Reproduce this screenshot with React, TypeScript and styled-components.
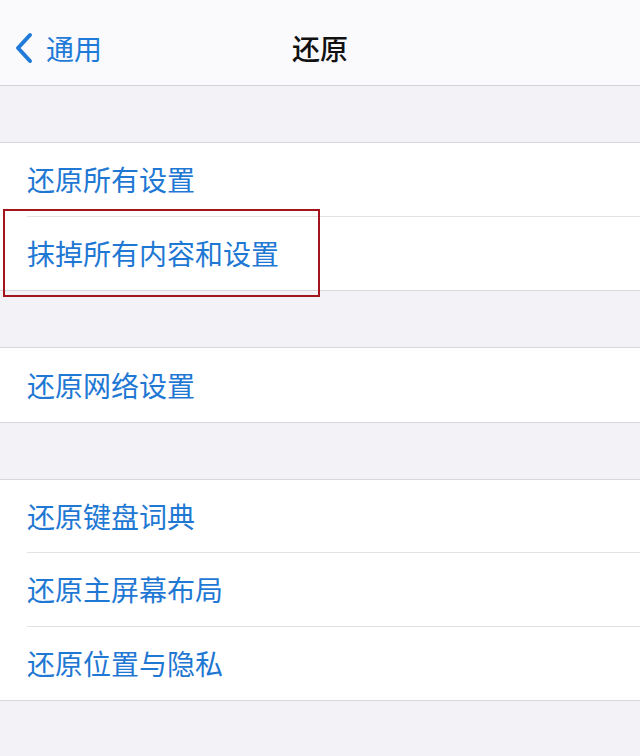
import React from "react";
import styled, { createGlobalStyle } from "styled-components";

const Global = createGlobalStyle`
  html, body {
    margin: 0;
    padding: 0;
    background: #f2f2f7;
  }
  body {
    font-family: "Noto Sans CJK SC", "Noto Sans", sans-serif;
  }
`;

const Page = styled.div`
  width: 640px;
  height: 756px;
  background: #f2f2f7;
  overflow: hidden;
`;

const NavBar = styled.div`
  height: 86px;
  background: #fafafc;
  border-bottom: 1px solid #d4d4d8;
  display: grid;
  grid-template-columns: 1fr auto 1fr;
  align-items: center;
  box-sizing: border-box;
  padding-top: 10px;
`;

const Back = styled.div`
  display: flex;
  align-items: center;
  gap: 12px;
  padding-left: 14px;
  color: #1f7ad8;
  font-size: 28px;
  line-height: 1;
`;

const Title = styled.div`
  color: #111;
  font-size: 28px;
  font-weight: 500;
  line-height: 1;
`;

const Gap = styled.div<{ $h: number }>`
  height: ${(p) => p.$h}px;
`;

const Group = styled.div`
  background: #fff;
  border-top: 1px solid #d8d8dc;
  border-bottom: 1px solid #d8d8dc;
`;

const Row = styled.div<{ $last?: boolean }>`
  position: relative;
  box-sizing: border-box;
  height: 73.5px;
  margin-left: 27px;
  display: flex;
  align-items: center;
  color: #1f78d3;
  font-size: 28px;
  line-height: 1;
  border-bottom: ${(p) => (p.$last ? "none" : "1px solid #e2e2e6")};
`;

const Highlight = styled.div`
  position: absolute;
  left: -24px;
  top: -8px;
  width: 317px;
  height: 88px;
  border: 2px solid #a3141c;
  box-sizing: border-box;
  pointer-events: none;
`;

const Chevron = () => (
  <svg width="20" height="32" viewBox="0 0 20 32" fill="none">
    <path
      d="M16 3 L4 16 L16 29"
      stroke="#1f7ad8"
      strokeWidth="4"
      strokeLinecap="round"
      strokeLinejoin="round"
    />
  </svg>
);

const groups: { label: string; mark?: boolean }[][] = [
  [{ label: "还原所有设置" }, { label: "抹掉所有内容和设置", mark: true }],
  [{ label: "还原网络设置" }],
  [{ label: "还原键盘词典" }, { label: "还原主屏幕布局" }, { label: "还原位置与隐私" }],
];

const gaps = [56, 56, 56];

export default function App() {
  return (
    <Page>
      <Global />
      <NavBar>
        <Back>
          <Chevron />
          <span>通用</span>
        </Back>
        <Title>还原</Title>
        <div />
      </NavBar>
      {groups.map((g, gi) => (
        <React.Fragment key={gi}>
          <Gap $h={gaps[gi]} />
          <Group>
            {g.map((item, i) => (
              <Row key={item.label} $last={i === g.length - 1}>
                {item.label}
                {item.mark && <Highlight />}
              </Row>
            ))}
          </Group>
        </React.Fragment>
      ))}
    </Page>
  );
}
